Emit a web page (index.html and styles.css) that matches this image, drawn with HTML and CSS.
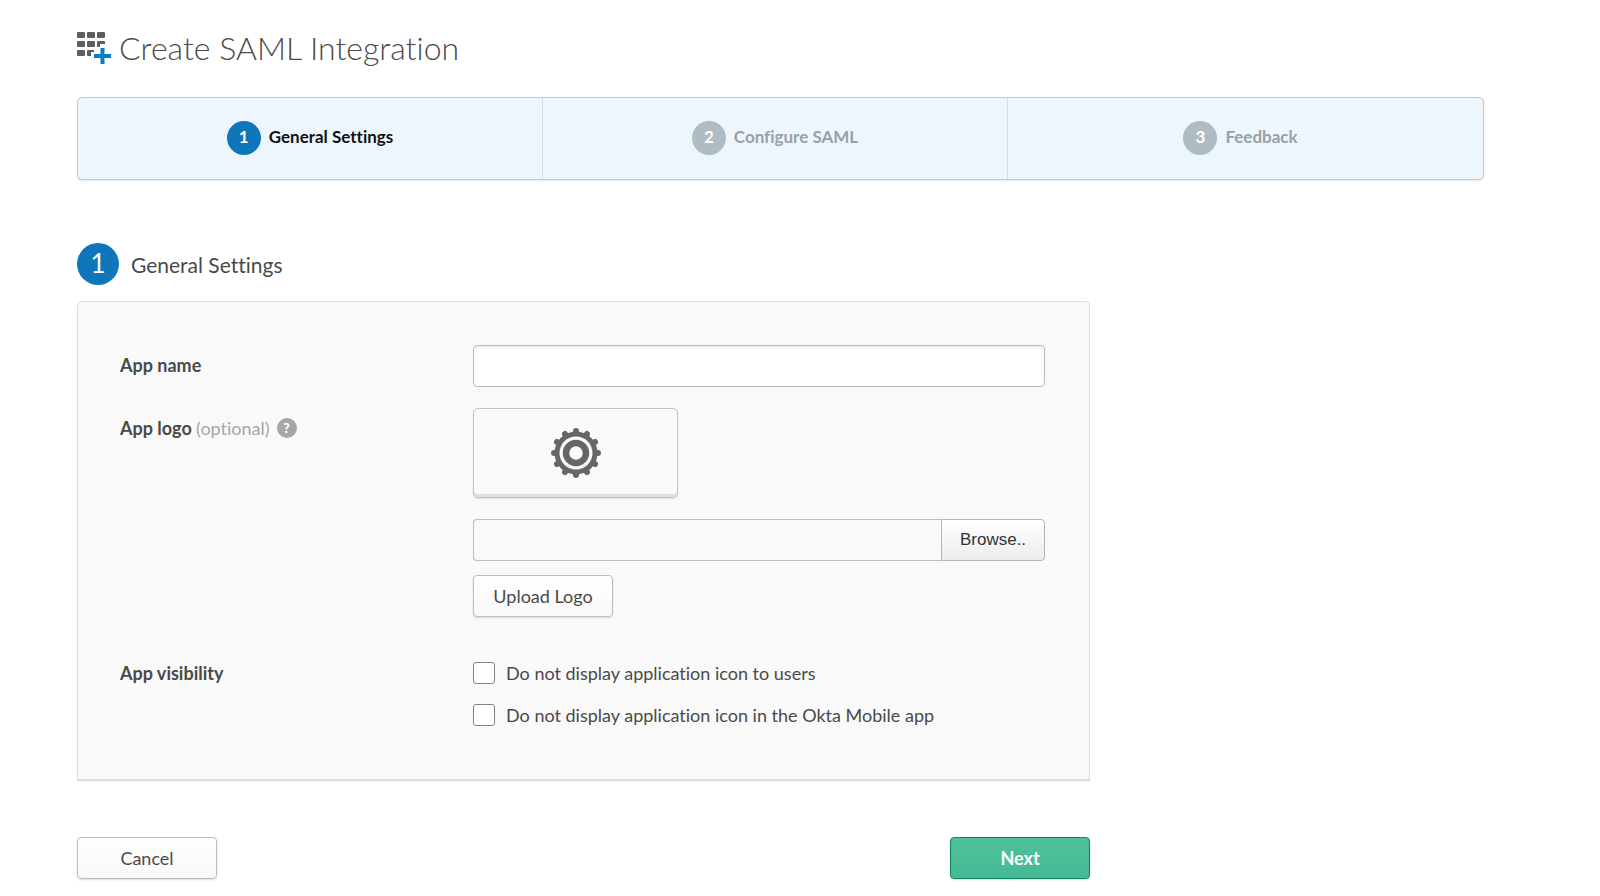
FILE: index.html
```html
<!DOCTYPE html>
<html lang="en">
<head>
<meta charset="utf-8">
<title>Create SAML Integration</title>
<link rel="stylesheet" href="styles.css">
</head>
<body>
<main class="page">
  <header class="page-header">
    <svg class="header-icon" viewBox="0 0 34 34" aria-hidden="true">
      <g fill="#5e5e5e">
        <rect x="0" y="1" width="8" height="6" rx="1"/><rect x="10" y="1" width="8" height="6" rx="1"/><rect x="20" y="1" width="8" height="6" rx="1"/>
        <rect x="0" y="10" width="8" height="6" rx="1"/><rect x="10" y="10" width="8" height="6" rx="1"/><path d="M21 10h6q1 0 1 1v2h-5v3h-2q-1 0-1-1v-4q0-1 1-1z"/>
        <rect x="0" y="19" width="8" height="6" rx="1"/><path d="M11 19h6v2h-3v4h-3q-1 0-1-1v-4q0-1 1-1z"/>
      </g>
      <path d="M25.500 17v16M17 25h17" stroke="#0b7dc4" stroke-width="4" fill="none"/>
    </svg>
    <h1 class="page-title">Create SAML Integration</h1>
  </header>

  <ol class="steps">
    <li class="step step-active"><span class="step-number">1</span><span>General Settings</span></li>
    <li class="step"><span class="step-number">2</span><span>Configure SAML</span></li>
    <li class="step"><span class="step-number">3</span><span>Feedback</span></li>
  </ol>

  <form class="settings">
    <div class="section-heading">
      <span class="section-number">1</span>
      <h2 class="section-title">General Settings</h2>
    </div>

    <div class="panel">
      <div class="row">
        <label class="row-label" for="app-name">App name</label>
        <input class="text-input" id="app-name" type="text">
      </div>

      <div class="row">
        <div class="row-label">
          <label for="logo-file">App logo <span class="optional">(optional)</span></label>
          <button class="help" type="button" aria-label="Help for app logo">?</button>
        </div>
        <div class="logo-fields">
          <div class="logo-preview">
            <svg class="gear" viewBox="-26 -26 52 52" aria-hidden="true">
              <g stroke="#666" stroke-width="6" stroke-linecap="round">
                <path d="M0-22V22M-22 0H22M-11-19L11 19M11-19L-11 19M-19-11L19 11M-19 11L19-11"/>
              </g>
              <circle r="21.500" fill="#666"/>
              <circle r="16.500" fill="#fafafa"/>
              <circle r="10" fill="#fafafa" stroke="#666" stroke-width="6.500"/>
            </svg>
          </div>
          <div class="file-picker">
            <input class="file-name" id="logo-file" type="text" readonly>
            <button class="browse" type="button">Browse..</button>
          </div>
          <button class="button" type="button">Upload Logo</button>
        </div>
      </div>

      <div class="row row-visibility" role="group" aria-labelledby="visibility-label">
        <div class="row-label" id="visibility-label">App visibility</div>
        <div class="checks">
          <label class="check"><input class="check-box" type="checkbox">Do not display application icon to users</label>
          <label class="check"><input class="check-box" type="checkbox">Do not display application icon in the Okta Mobile app</label>
        </div>
      </div>
    </div>

    <div class="actions">
      <button class="button" type="button">Cancel</button>
      <button class="button button-primary" type="submit">Next</button>
    </div>
  </form>
</main>
</body>
</html>
```
FILE: styles.css
```css
* {
  box-sizing: border-box;
}

body {
  margin: 0;
  background: #fff;
  color: #4a4a4a;
  font-family: Lato, "Open Sans", sans-serif;
  font-size: 18px;
  font-variant-ligatures: none;
  line-height: 24px;
}

button,
input {
  margin: 0;
  font: inherit;
  color: inherit;
}

.page {
  padding: 28px 116px 16px 77px;
}

.page-header {
  display: flex;
  align-items: center;
  gap: 8px;
}

.header-icon {
  width: 34px;
  height: 34px;
}

.page-title {
  margin: 0;
  font-size: 32px;
  font-weight: 300;
  line-height: 40px;
}

.steps {
  display: grid;
  grid-template-columns: 93fr 93fr 95fr;
  margin: 29px 0 63px;
  padding: 0;
  list-style: none;
  background: #edf6fd;
  border: 1px solid #bccbd5;
  border-radius: 5px;
  box-shadow: 0 1px 2px rgba(0, 0, 0, 0.1);
}

.step {
  display: flex;
  justify-content: center;
  gap: 8px;
  padding: 23px 0 24px;
  border-right: 1px solid #cfdfe6;
  color: #98a1a5;
  font-weight: 700;
  font-size: 17px;
  line-height: 31px;
}

.step:last-child {
  padding-right: 10px;
  border-right: 0;
}

.step-active {
  color: #111;
}

.step-number {
  width: 34px;
  height: 34px;
  border-radius: 50%;
  background: #afbcc4;
  color: #fff;
  text-align: center;
}

.step-active .step-number {
  background: #0f76bb;
}

.settings {
  width: 72%;
}

.section-heading {
  display: flex;
  align-items: center;
  gap: 12px;
  margin-bottom: 16px;
}

.section-number {
  width: 42px;
  height: 42px;
  border-radius: 50%;
  background: #0f76bb;
  color: #fff;
  font-size: 26px;
  line-height: 40px;
  text-align: center;
}

.section-title {
  margin: 0;
  padding-top: 2px;
  font-size: 21px;
  font-weight: 400;
}

.panel {
  display: flex;
  flex-direction: column;
  gap: 21px;
  padding: 43px 44px 52px 42px;
  background: #f9f9f9;
  border: 1px solid #dcdcdc;
  border-bottom-width: 2px;
  border-radius: 5px 5px 0 0;
  box-shadow: 0 1px 2px rgba(0, 0, 0, 0.05);
}

.row {
  display: grid;
  grid-template-columns: 353px 1fr;
}

.row-visibility {
  padding-top: 23px;
}

.row-label {
  display: flex;
  align-items: center;
  align-self: start;
  gap: 7px;
  padding: 8px 0;
  font-size: 18px;
  font-weight: 700;
}

.row-visibility .row-label {
  padding: 0;
}

.optional {
  color: #a6a6a6;
  font-weight: 400;
}

.help {
  width: 20px;
  height: 20px;
  padding: 0;
  border: 0;
  border-radius: 50%;
  background: #a6a6a6;
  color: #fff;
  font-size: 14px;
  font-weight: 900;
  line-height: 20px;
}

.text-input {
  width: 100%;
  height: 42px;
  padding: 0 12px;
  background: #fff;
  border: 1px solid #bdbdbd;
  border-radius: 4px;
  box-shadow: inset 0 2px 3px rgba(0, 0, 0, 0.08);
}

.logo-fields {
  display: flex;
  flex-direction: column;
  align-items: flex-start;
}

.logo-preview {
  display: flex;
  align-items: center;
  justify-content: center;
  width: 205px;
  height: 90px;
  border: 1px solid #c4c4c4;
  border-radius: 5px;
  background: #fafafa;
  box-shadow: inset 0 -3px 0 #e0e0e0, 0 1px 2px rgba(0, 0, 0, 0.1);
}

.gear {
  width: 52px;
  height: 52px;
}

.file-picker {
  display: flex;
  align-self: stretch;
  height: 42px;
  margin: 21px 0 14px;
}

.file-name {
  flex: 1;
  min-width: 0;
  padding: 0 12px;
  background: #f9f9f9;
  border: 1px solid #bdbdbd;
  border-right: 0;
  border-radius: 4px 0 0 4px;
}

.browse {
  width: 104px;
  padding: 0;
  background: linear-gradient(#fff, #ececec);
  border: 1px solid #b5b5b5;
  border-radius: 0 4px 4px 0;
  color: #333;
  font-family: "Liberation Sans", Arial, sans-serif;
  font-size: 17px;
}

.button {
  width: 140px;
  height: 42px;
  padding: 0;
  background: linear-gradient(#fff, #f8f8f8);
  border: 1px solid #bdbdbd;
  border-radius: 4px;
  box-shadow: 0 1px 2px rgba(0, 0, 0, 0.14);
}

.button-primary {
  background: linear-gradient(#4fc09c, #45ba95);
  border-color: #0d8361;
  color: #fff;
  font-weight: 700;
}

.checks {
  display: flex;
  flex-direction: column;
  gap: 18px;
}

.check {
  display: flex;
  align-items: center;
  gap: 11px;
}

.check-box {
  flex: none;
  width: 22px;
  height: 22px;
  appearance: none;
  background: #fff;
  border: 1px solid #858585;
  border-radius: 3px;
}

.check-box:checked {
  background: #0f76bb;
}

.actions {
  display: flex;
  justify-content: space-between;
  margin-top: 56px;
}
```
